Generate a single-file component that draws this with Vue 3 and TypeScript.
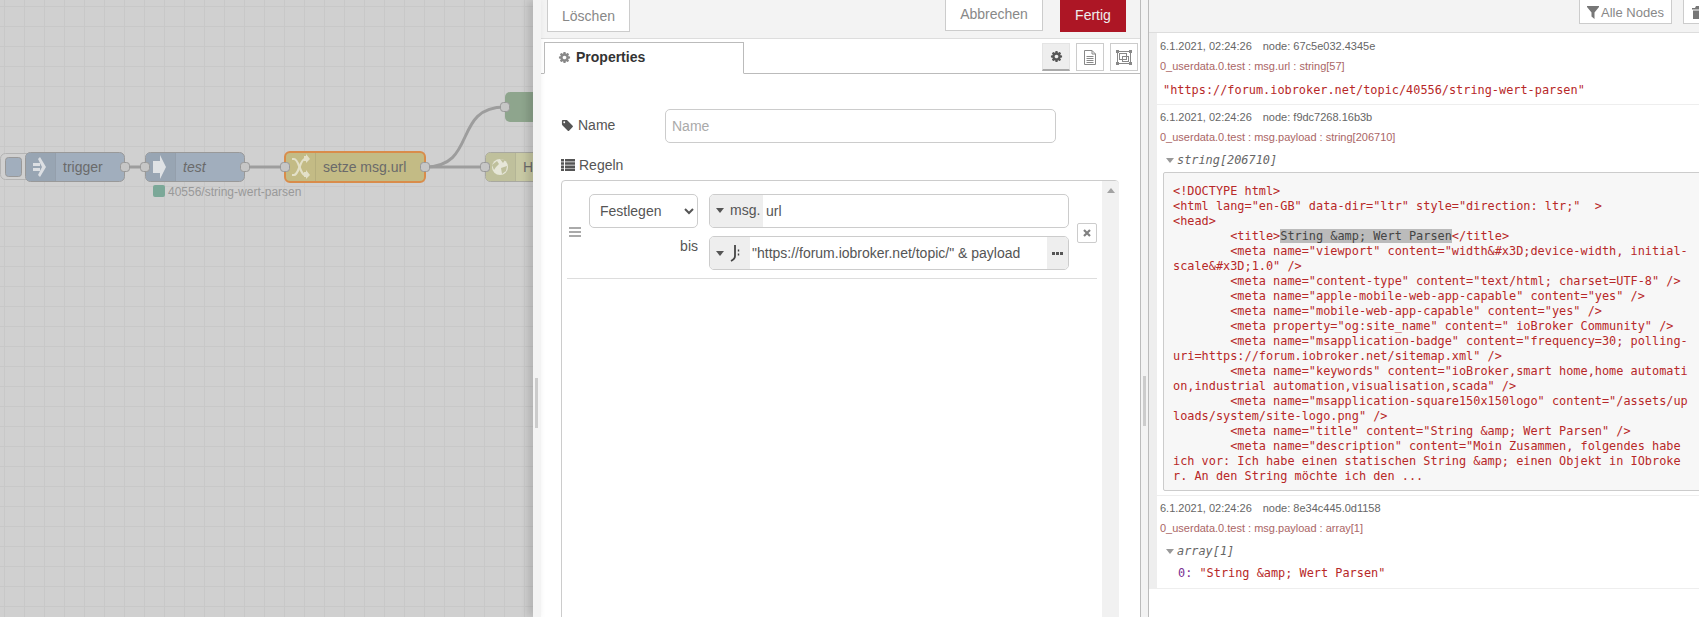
<script setup lang="ts">
interface DebugMsg {
  date: string
  node: string
  name: string
}
interface CodeLine {
  text: string
  mark?: string
  tail?: string
}

const T = '        '
const cog =
  'M1152 896q0-106-75-181t-181-75-181 75-75 181 75 181 181 75 181-75 75-181zm512-109v222q0 12-8 23t-20 13l-185 28q-19 54-39 91 35 50 107 138 10 12 10 25t-9 23q-27 37-99 108t-94 71q-12 0-26-9l-138-108q-44 23-91 38-16 136-29 186-7 28-36 28h-222q-14 0-24.5-8.5t-11.5-21.5l-28-184q-49-16-90-37l-141 107q-10 9-25 9-14 0-25-11-126-114-165-168-7-10-7-23 0-12 8-23 15-21 51-66.5t54-70.5q-27-50-41-99l-183-27q-13-2-21-12.5t-8-23.5v-222q0-12 8-23t19-13l186-28q14-46 39-92-40-57-107-138-10-12-10-24 0-10 9-23 26-36 98.5-107.5t94.5-71.5q13 0 26 10l138 107q44-23 91-38 16-136 29-186 7-28 36-28h222q14 0 24.5 8.5t11.5 21.5l28 184q49 16 90 37l142-107q9-9 24-9 13 0 25 10 129 119 165 170 7 8 7 22 0 12-8 23-15 21-51 66.5t-54 70.5q26 50 41 98l183 28q13 2 21 12.5t8 23.5z'
const tag =
  'M576 448q0-53-37.5-90.5t-90.5-37.5-90.5 37.5-37.5 90.5 37.5 90.5 90.5 37.5 90.5-37.5 37.5-90.5zm1067 576q0 53-37 90l-491 492q-39 37-91 37-53 0-90-37l-715-716q-38-37-64.5-101t-26.5-117v-416q0-52 38-90t90-38h416q53 0 117 26.5t102 64.5l715 714q37 39 37 91z'

const messages: DebugMsg[] = [
  { date: '6.1.2021, 02:24:26', node: 'node: 67c5e032.4345e', name: '0_userdata.0.test : msg.url : string[57]' },
  { date: '6.1.2021, 02:24:26', node: 'node: f9dc7268.16b3b', name: '0_userdata.0.test : msg.payload : string[206710]' },
  { date: '6.1.2021, 02:24:26', node: 'node: 8e34c445.0d1158', name: '0_userdata.0.test : msg.payload : array[1]' },
]

const codeLines: CodeLine[] = [
  { text: '<!DOCTYPE html>' },
  { text: '<html lang="en-GB" data-dir="ltr" style="direction: ltr;"  >' },
  { text: '<head>' },
  { text: T + '<title>', mark: 'String &amp; Wert Parsen', tail: '</title>' },
  { text: T + '<meta name="viewport" content="width&#x3D;device-width, initial-' },
  { text: 'scale&#x3D;1.0" />' },
  { text: T + '<meta name="content-type" content="text/html; charset=UTF-8" />' },
  { text: T + '<meta name="apple-mobile-web-app-capable" content="yes" />' },
  { text: T + '<meta name="mobile-web-app-capable" content="yes" />' },
  { text: T + '<meta property="og:site_name" content=" ioBroker Community" />' },
  { text: T + '<meta name="msapplication-badge" content="frequency=30; polling-' },
  { text: 'uri=https://forum.iobroker.net/sitemap.xml" />' },
  { text: T + '<meta name="keywords" content="ioBroker,smart home,home automati' },
  { text: 'on,industrial automation,visualisation,scada" />' },
  { text: T + '<meta name="msapplication-square150x150logo" content="/assets/up' },
  { text: 'loads/system/site-logo.png" />' },
  { text: T + '<meta name="title" content="String &amp; Wert Parsen" />' },
  { text: T + '<meta name="description" content="Moin Zusammen, folgendes habe' },
  { text: 'ich vor: Ich habe einen statischen String &amp; einen Objekt in IObroke' },
  { text: 'r. An den String möchte ich den ...' },
]
</script>

<template>
  <div class="app">
    <!-- Flow canvas -->
    <div class="canvas">
      <svg class="flow" width="533" height="617" viewBox="0 0 533 617">
        <defs>
          <pattern id="grid" x="4" y="6" width="20" height="20" patternUnits="userSpaceOnUse">
            <path d="M0.5 0V20M0 0.5H20" stroke="#c8c8c8" stroke-width="1" fill="none" />
          </pattern>
        </defs>
        <rect width="533" height="617" fill="#d0d0d0" />
        <rect width="533" height="617" fill="url(#grid)" />

        <g fill="none" stroke="#9d9d9d" stroke-width="3">
          <path d="M125 167H145" />
          <path d="M245 167H285" />
          <path d="M425 167H485" />
          <path d="M425 167C478 167 452 107 505 107" />
        </g>

        <!-- inject button -->
        <rect x="0.5" y="153.5" width="32" height="26" rx="5" fill="#d0d0d0" stroke="#b4b4b4" />
        <rect x="5.5" y="157.5" width="16" height="19" rx="3" fill="#a1aebd" stroke="#999" />

        <!-- trigger -->
        <rect x="25.5" y="152.5" width="99" height="29" rx="5" fill="#a1aebd" stroke="#999" />
        <path d="M30 153H55V181H30a4 4 0 0 1-4-4V157a4 4 0 0 1 4-4z" fill="#98a5b3" />
        <path d="M55.5 153V181" stroke="#949fac" />
        <g fill="#dcdfe3">
          <path d="M33 163h7v3h-7zM33 168h7v3h-7z" />
          <path d="M38 159l2-2 6 10-6 10-2-2 4-8z" />
        </g>
        <text x="63" y="172" class="label">trigger</text>

        <!-- test -->
        <rect x="145.5" y="152.5" width="99" height="29" rx="5" fill="#a1aebd" stroke="#999" />
        <path d="M150 153H175V181H150a4 4 0 0 1-4-4V157a4 4 0 0 1 4-4z" fill="#98a5b3" />
        <path d="M175.5 153V181" stroke="#949fac" />
        <path d="M153 161h7v-6l6 12-6 12v-6h-7z" fill="#dfe2e5" />
        <text x="183" y="172" class="label italic">test</text>
        <rect x="153" y="185" width="12" height="12" rx="2" fill="#7ba898" />
        <text x="168" y="195.5" class="status">40556/string-wert-parsen</text>

        <!-- change -->
        <rect x="285" y="152" width="140" height="30" rx="5" fill="#c3bb85" stroke="#d98c4a" stroke-width="2" />
        <path d="M315.5 153V181" stroke="#b5ae7c" />
        <g fill="none" stroke="#e3e0c8" stroke-width="2.2">
          <path d="M292 159h2c5 0 6 16 11 16h1" />
          <path d="M292 175h2c5 0 6-16 11-16h1" />
        </g>
        <path d="M304 156l2 0 0-2 4 5-4 4 0-2-2 0zM304 172l2 0 0-2 4 5-4 4 0-2-2 0z" fill="#e3e0c8" />
        <text x="323" y="172" class="label">setze msg.url</text>

        <!-- http -->
        <rect x="485.5" y="152.5" width="60" height="29" rx="5" fill="#c8c9a4" stroke="#a8a8a0" />
        <path d="M490 153H515V181H490a4 4 0 0 1-4-4V157a4 4 0 0 1 4-4z" fill="#bfc09c" />
        <path d="M515.5 153V181" stroke="#b4b596" />
        <circle cx="500" cy="167" r="8" fill="#e6e6d8" />
        <path d="M492 165l5-4 2 3-3 3-2 3zM501 168l6-2-1 5-4 3zM500 159l5 1-2 3z" fill="#bfc09c" />
        <text x="523" y="172" class="label">H</text>

        <!-- top node -->
        <rect x="505" y="92" width="40" height="30" rx="5" fill="#8ea58d" />

        <!-- ports -->
        <g fill="#c6c6c6" stroke="#999">
          <rect x="120.5" y="162.5" width="9" height="9" rx="3" />
          <rect x="140.5" y="162.5" width="9" height="9" rx="3" />
          <rect x="240.5" y="162.5" width="9" height="9" rx="3" />
          <rect x="280.5" y="162.5" width="9" height="9" rx="3" />
          <rect x="420.5" y="162.5" width="9" height="9" rx="3" />
          <rect x="480.5" y="162.5" width="9" height="9" rx="3" />
          <rect x="500.5" y="102.5" width="9" height="9" rx="3" />
        </g>
      </svg>
    </div>

    <div class="strip strip-left"><span class="grip"></span></div>

    <!-- Edit tray -->
    <section class="tray">
      <header class="tray-bar">
        <button class="btn btn-delete">Löschen</button>
        <span class="spacer"></span>
        <button class="btn btn-cancel">Abbrechen</button>
        <button class="btn btn-done">Fertig</button>
      </header>

      <div class="tabs">
        <div class="tab">
          <svg class="ic-gear" viewBox="0 0 1792 1792"><path :d="cog" /></svg>
          Properties
        </div>
        <div class="tab-tools">
          <span class="tool active">
            <svg class="ic-gear dark" viewBox="0 0 1792 1792"><path :d="cog" /></svg>
          </span>
          <span class="tool">
            <svg width="12" height="15" viewBox="0 0 12 15" fill="none" stroke="#888">
              <path d="M0.5 0.5H8L11.5 4V14.5H0.5z" />
              <path d="M8 0.5V4H11.5M2.5 6.5H9.5M2.5 8.5H9.5M2.5 10.5H9.5M2.5 12.500H9.5" />
            </svg>
          </span>
          <span class="tool">
            <svg width="16" height="15" viewBox="0 0 16 15" fill="none" stroke="#888">
              <rect x="1.5" y="1.5" width="13" height="12" />
              <rect x="3.5" y="3.5" width="7" height="6" />
              <rect x="6.5" y="6.5" width="6" height="5" />
              <path d="M0 0h3v3H0zM13 0h3v3h-3zM0 12h3v3H0zM13 12h3v3h-3z" fill="#888" stroke="none" />
            </svg>
          </span>
        </div>
      </div>

      <div class="form">
        <div class="name-row">
          <label class="field-label name-label">
            <svg class="ic-tag" viewBox="0 0 1792 1792"><path :d="tag" /></svg>
            Name
          </label>
          <input class="name-input" type="text" placeholder="Name" />
        </div>

        <div class="field-label rules-label">
          <svg width="14" height="12" viewBox="0 0 14 12" fill="#555">
            <path d="M0 0h3v2.5H0zM4 0h10v2.5H4zM0 3.2h3v2.5H0zM4 3.2h10v2.5H4zM0 6.4h3v2.5H0zM4 6.4h10v2.5H4zM0 9.5h3V12H0zM4 9.5h10V12H4z" />
          </svg>
          Regeln
        </div>

        <div class="rules">
          <div class="rules-list">
            <div class="rule">
              <span class="drag"><i></i><i></i><i></i></span>
              <div class="rule-labels">
                <select class="action">
                  <option>Festlegen</option>
                </select>
                <span class="bis">bis</span>
              </div>
              <div class="rule-inputs">
                <div class="typed">
                  <span class="typed-btn msg-btn"><b class="caret"></b>msg.</span>
                  <span class="typed-val">url</span>
                </div>
                <div class="typed">
                  <span class="typed-btn jsonata-btn">
                    <b class="caret"></b>
                    <svg width="10" height="18" viewBox="0 0 10 18" fill="none" stroke="#444">
                      <path d="M5 1V12C5 14.5 3 16 1 17" stroke-width="1.8" />
                      <path d="M8.5 5.5V7.5M8.5 9.5V11.5" stroke-width="1.4" />
                    </svg>
                  </span>
                  <span class="typed-val expr">"https://forum.iobroker.net/topic/" &amp; payload</span>
                  <span class="typed-more"><i></i><i></i><i></i></span>
                </div>
              </div>
              <span class="remove">
                <svg width="8" height="8" viewBox="0 0 8 8" stroke="#808080" stroke-width="2.2"><path d="M1 1L7 7M7 1L1 7" /></svg>
              </span>
            </div>
          </div>
          <div class="rules-scroll"><span class="arrow-up"></span></div>
        </div>
      </div>
    </section>

    <div class="strip strip-right"><span class="grip"></span></div>

    <!-- Debug sidebar -->
    <aside class="sidebar">
      <header class="side-bar">
        <button class="side-btn">
          <svg width="12" height="13" viewBox="0 0 12 13" fill="#777"><path d="M0 0H12V1L7.5 6.5V13L4.5 10.5V6.5L0 1z" /></svg>
          Alle Nodes
        </button>
        <button class="side-btn trash">
          <svg width="12" height="13" viewBox="0 0 12 13" fill="#777">
            <path d="M4 0H8L9 2H12V3.5H0V2H3zM1 4.5H11V13H1z" />
          </svg>
        </button>
      </header>

      <div class="messages">
        <article class="msg">
          <div class="meta"><span class="date">{{ messages[0].date }}</span><span>{{ messages[0].node }}</span></div>
          <div class="meta name">{{ messages[0].name }}</div>
          <div class="value url-value">"https://forum.iobroker.net/topic/40556/string-wert-parsen"</div>
        </article>

        <article class="msg">
          <div class="meta"><span class="date">{{ messages[1].date }}</span><span>{{ messages[1].node }}</span></div>
          <div class="meta name">{{ messages[1].name }}</div>
          <div class="toggle"><b class="tri"></b>string[206710]</div>
          <div class="code">
            <div v-for="(line, i) in codeLines" :key="i" class="code-line">
              <span>{{ line.text }}</span><span v-if="line.mark" class="sel">{{ line.mark }}</span><span v-if="line.tail">{{ line.tail }}</span>
            </div>
          </div>
        </article>

        <article class="msg">
          <div class="meta"><span class="date">{{ messages[2].date }}</span><span>{{ messages[2].node }}</span></div>
          <div class="meta name">{{ messages[2].name }}</div>
          <div class="toggle"><b class="tri"></b>array[1]</div>
          <div class="value item"><span class="key">0: </span><span>"String &amp;amp; Wert Parsen"</span></div>
        </article>
      </div>
    </aside>
  </div>
</template>

<style>
html,
body {
  margin: 0;
  background: #fff;
  overflow: hidden;
}
</style>

<style scoped>
.app {
  display: flex;
  width: 1699px;
  height: 617px;
  overflow: hidden;
  font-family: "Liberation Sans", Arial, sans-serif;
  font-size: 14px;
  color: #555;
}

.canvas {
  flex: 0 0 533px;
  height: 617px;
  overflow: hidden;
}
.flow {
  display: block;
}
.label {
  font-size: 14px;
  font-family: "Liberation Sans", Arial, sans-serif;
  fill: #6a6a6a;
}
.italic {
  font-style: italic;
}
.status {
  font-size: 12px;
  font-family: "Liberation Sans", Arial, sans-serif;
  fill: #999;
}

.strip {
  flex: none;
  display: flex;
  align-items: flex-start;
  background: #f3f3f3;
  box-sizing: border-box;
}
.grip {
  display: block;
  width: 3px;
  height: 50px;
  background: #ccc;
}
.strip-left {
  width: 8px;
  padding: 378px 0 0 2px;
  position: relative;
  box-shadow: -4px 0 8px rgba(0, 0, 0, 0.18);
}
.strip-right {
  width: 7px;
  padding: 376px 0 0 2px;
}

.tray {
  flex: 0 0 600px;
  box-sizing: border-box;
  border-right: 1px solid #bbb;
  background: #fff;
  overflow: hidden;
}
.tray-bar {
  display: flex;
  align-items: flex-end;
  box-sizing: border-box;
  height: 39px;
  padding: 0 14px 6px 6px;
  background: #f3f3f3;
  border-bottom: 1px solid #ddd;
  overflow: hidden;
}
.spacer {
  flex: 1;
}
.btn {
  box-sizing: border-box;
  height: 40px;
  padding: 6px 0 0;
  font: 14px "Liberation Sans", Arial, sans-serif;
  border: 1px solid #ccc;
  background: #fff;
  color: #888;
}
.btn-delete {
  width: 83px;
  padding-top: 8px;
}
.btn-cancel {
  width: 98px;
  margin-bottom: 1px;
}
.btn-done {
  width: 66px;
  margin-left: 17px;
  background: #ad1625;
  border-color: #ad1625;
  color: #eee;
}

.tabs {
  display: flex;
  justify-content: space-between;
  align-items: flex-end;
  box-sizing: border-box;
  height: 35px;
  padding-left: 3px;
  border-bottom: 1px solid #bbb;
}
.tab {
  box-sizing: border-box;
  display: flex;
  align-items: center;
  gap: 5px;
  width: 200px;
  height: 32px;
  margin-bottom: -1px;
  padding: 0 0 2px 13px;
  background: #fff;
  border: 1px solid #bbb;
  border-bottom-color: #fff;
  font-weight: bold;
  color: #333;
}
.ic-gear {
  width: 13px;
  height: 13px;
  fill: #888;
}
.ic-gear.dark {
  fill: #555;
}
.tab-tools {
  display: flex;
  gap: 6px;
  padding: 0 2px 2px 0;
}
.tool {
  box-sizing: border-box;
  display: flex;
  align-items: center;
  justify-content: center;
  width: 28px;
  height: 28px;
  border: 1px solid #ccc;
  background: #fff;
}
.tool.active {
  background: #eee;
  border-color: #e4e4e4;
  border-bottom: 2px solid #aaa;
}

.form {
  padding: 35px 20px 0;
}
.name-row {
  display: flex;
  align-items: center;
}
.field-label {
  display: flex;
  align-items: center;
  color: #555;
}
.name-label {
  flex: 0 0 104px;
  gap: 4px;
  margin-top: -2px;
}
.ic-tag {
  width: 13px;
  height: 13px;
  fill: #555;
}
.name-input {
  box-sizing: border-box;
  width: 391px;
  height: 34px;
  padding: 0 6px;
  font: 14px "Liberation Sans", Arial, sans-serif;
  color: #555;
  border: 1px solid #ccc;
  border-radius: 5px;
  outline: none;
}
.name-input::placeholder {
  color: #aaa;
}
.rules-label {
  gap: 4px;
  height: 20px;
  margin-top: 12px;
}
.rules {
  display: flex;
  box-sizing: border-box;
  width: 558px;
  height: 500px;
  margin-top: 5px;
  border: 1px solid #ccc;
  border-radius: 4px;
}
.rules-list {
  flex: 1;
  padding: 0 5px;
}
.rule {
  display: flex;
  box-sizing: border-box;
  height: 98px;
  padding: 13px 0 8px 2px;
  border-bottom: 1px solid #ddd;
}
.drag {
  display: flex;
  flex-direction: column;
  justify-content: center;
  gap: 2px;
  width: 12px;
  margin-right: 8px;
}
.drag i {
  display: block;
  height: 2px;
  background: #aaa;
}
.rule-labels {
  display: flex;
  flex-direction: column;
  width: 109px;
  margin-right: 11px;
}
.action {
  box-sizing: border-box;
  width: 109px;
  height: 34px;
  padding: 0 0 0 6px;
  font: 14px "Liberation Sans", Arial, sans-serif;
  color: #555;
  background: #fff;
  border: 1px solid #ccc;
  border-radius: 5px;
  outline: none;
}
.bis {
  margin-top: 8px;
  line-height: 20px;
  text-align: right;
  color: #555;
}
.rule-inputs {
  display: flex;
  flex-direction: column;
  gap: 8px;
  width: 360px;
}
.typed {
  display: flex;
  align-items: stretch;
  box-sizing: border-box;
  height: 34px;
  border: 1px solid #ccc;
  border-radius: 5px;
  overflow: hidden;
  line-height: 32px;
  color: #555;
}
.typed-btn {
  flex: none;
  display: flex;
  align-items: center;
  background: #eee;
  padding-left: 6px;
}
.msg-btn {
  width: 53px;
  box-sizing: border-box;
  padding-bottom: 2px;
}
.jsonata-btn {
  width: 40px;
  box-sizing: border-box;
}
.caret {
  flex: none;
  width: 0;
  height: 0;
  margin-right: 6px;
  border-left: 4px solid transparent;
  border-right: 4px solid transparent;
  border-top: 5px solid #555;
}
.typed-val {
  flex: 1;
  padding-left: 3px;
}
.expr {
  padding-left: 2px;
  line-height: 32px;
}
.typed-more {
  flex: none;
  display: flex;
  align-items: center;
  justify-content: center;
  gap: 1px;
  width: 21px;
  background: #eee;
}
.typed-more i {
  display: block;
  width: 3px;
  height: 3px;
  background: #555;
}
.remove {
  display: flex;
  align-items: center;
  justify-content: center;
  box-sizing: border-box;
  width: 20px;
  height: 20px;
  margin: 29px 0 0 8px;
  border: 1px solid #ccc;
  border-radius: 2px;
}
.rules-scroll {
  flex: 0 0 17px;
  display: flex;
  justify-content: center;
  padding-top: 7px;
  box-sizing: border-box;
  background: #f1f1f1;
  border-top-right-radius: 3px;
}
.arrow-up {
  width: 0;
  height: 0;
  border-left: 4px solid transparent;
  border-right: 4px solid transparent;
  border-bottom: 5px solid #a3a3a3;
}

.sidebar {
  flex: 1;
  min-width: 0;
  border-left: 1px solid #bbb;
  overflow: hidden;
}
.side-bar {
  display: flex;
  align-items: flex-end;
  justify-content: flex-end;
  gap: 11px;
  box-sizing: border-box;
  height: 33px;
  padding-bottom: 8px;
  background: #f3f3f3;
  border-bottom: 1px solid #ddd;
  overflow: hidden;
}
.side-btn {
  box-sizing: border-box;
  display: flex;
  align-items: center;
  justify-content: center;
  gap: 2px;
  width: 93px;
  height: 32px;
  padding: 8px 0 0;
  font: 13px "Liberation Sans", Arial, sans-serif;
  color: #888;
  background: #fff;
  border: 1px solid #ccc;
}
.side-btn.trash {
  flex: none;
  width: 30px;
  margin-right: -14px;
  justify-content: flex-start;
  padding-left: 8px;
}
.msg {
  box-sizing: border-box;
  padding: 2px 0 7px 3px;
  border-left: 8px solid #eee;
  border-bottom: 1px solid #eee;
  background: #fff;
}
.msg:first-child {
  padding-top: 3px;
  padding-bottom: 6px;
}
.meta {
  font-size: 11px;
  line-height: 20px;
  color: #666;
  white-space: nowrap;
}
.date {
  margin-right: 11px;
}
.name {
  color: #a66;
}
.value,
.toggle,
.code {
  font-family: "DejaVu Sans Mono", "Liberation Mono", monospace;
  font-size: 11.88px;
  line-height: 15px;
}
.value {
  color: #b72828;
  white-space: pre;
}
.url-value {
  margin: 7px 0 0 3px;
}
.toggle {
  display: flex;
  align-items: center;
  margin: 6px 0 0 6px;
  font-style: italic;
  color: #666;
}
.tri {
  width: 0;
  height: 0;
  margin-right: 3px;
  border-left: 4px solid transparent;
  border-right: 4px solid transparent;
  border-top: 5px solid #999;
}
.code {
  box-sizing: border-box;
  width: 540px;
  margin: 4px 0 0 3px;
  padding: 11px 0 6px 9px;
  color: #b72828;
  background: #f7f7f7;
  border: 1px solid #ccc;
  border-radius: 2px;
}
.code-line {
  height: 15px;
  white-space: pre;
}
.sel {
  background: #bbb;
  color: #444;
}
.msg:nth-child(2) {
  padding-bottom: 4px;
}
.item {
  margin: 7px 0 0 18px;
}
.key {
  color: #792e90;
}
</style>
